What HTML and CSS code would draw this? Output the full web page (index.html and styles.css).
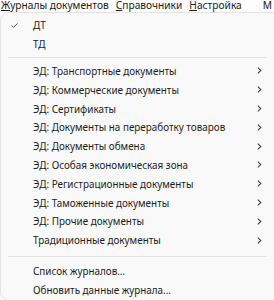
FILE: index.html
```html
<!DOCTYPE html>
<html>
<head>
    <title>Журналы документов</title>
    <link rel="stylesheet" href="styles.css">
</head>
<body>
    <div class="menubar">
        <span class="top-item"><u>Ж</u>урналы документов</span>
        <span class="top-item"><u>С</u>правочники</span>
        <span class="top-item"><u>Н</u>астройка</span>
        <span class="top-item">М</span>
    </div>

    <div class="dropdown">
        <div class="row">
            <span class="mark">
                <svg width="7" height="5" viewBox="0 0 7 5"><polyline points="0.5,2.3 2.5,4.3 6.5,0.5" fill="none" stroke="#555" stroke-width="1"/></svg>
            </span>
            <span class="label">ДТ</span>
        </div>
        <div class="row"><span class="mark"></span><span class="label">ТД</span></div>

        <div class="sep sep-top"></div>

        <div class="row sub"><span class="mark"></span><span class="label">ЭД: Транспортные документы</span><span class="arrow"></span></div>
        <div class="row sub"><span class="mark"></span><span class="label">ЭД: Коммерческие документы</span><span class="arrow"></span></div>
        <div class="row sub"><span class="mark"></span><span class="label">ЭД: Сертификаты</span><span class="arrow"></span></div>
        <div class="row sub"><span class="mark"></span><span class="label">ЭД: Документы на переработку товаров</span><span class="arrow"></span></div>
        <div class="row sub"><span class="mark"></span><span class="label">ЭД: Документы обмена</span><span class="arrow"></span></div>
        <div class="row sub"><span class="mark"></span><span class="label">ЭД: Особая экономическая зона</span><span class="arrow"></span></div>
        <div class="row sub"><span class="mark"></span><span class="label">ЭД: Регистрационные документы</span><span class="arrow"></span></div>
        <div class="row sub"><span class="mark"></span><span class="label">ЭД: Таможенные документы</span><span class="arrow"></span></div>
        <div class="row sub"><span class="mark"></span><span class="label">ЭД: Прочие документы</span><span class="arrow"></span></div>
        <div class="row sub"><span class="mark"></span><span class="label">Традиционные документы</span><span class="arrow"></span></div>

        <div class="sep sep-bottom"></div>

        <div class="row"><span class="mark"></span><span class="label">Список журналов...</span></div>
        <div class="row"><span class="mark"></span><span class="label">Обновить данные журнала...</span></div>
    </div>

    <script>
        // шеврон подменю одинаковый у всех строк
        document.querySelectorAll('.arrow').forEach(a => {
            a.innerHTML = '<svg width="5" height="7" viewBox="0 0 5 7"><polyline points="0.8,0.6 3.8,3.5 0.8,6.4" fill="none" stroke="#444" stroke-width="1.1"/></svg>';
        });
    </script>
</body>
</html>
```

FILE: styles.css
```css
body {
    margin: 0;
    padding: 0;
    background: #fdfdfd;
    font-family: 'Noto Sans', 'Open Sans', sans-serif;
    font-size: 10px;
    color: #1b1b1b;
    overflow: hidden;
}

/* верхнее меню, обрезано сверху */
.menubar {
    height: 12px;
    margin-top: -3px;
    padding-left: 1px;
    display: flex;
    gap: 7px;
    line-height: 16px;
    font-size: 10.2px;
    white-space: nowrap;
}
.top-item u {
    text-decoration-thickness: 1px;
    text-underline-offset: 1px;
}
.top-item:last-child {
    margin-left: 14px;
}

.dropdown {
    margin-top: 3px;
    width: 290px;
    background: #f9f9f9;
    border: 1px solid #e4e4e4;
    border-radius: 8px;
    padding: 3px 0 1px;
}

.row {
    display: flex;
    align-items: center;
    height: 18.8px;
    white-space: nowrap;
}
.mark {
    width: 32px;
    padding-left: 10px;
    box-sizing: border-box;
    display: flex;
    align-items: center;
}
.label {
    flex: 1;
    font-size: 9.9px;
}
.arrow {
    display: flex;
    align-items: center;
    margin-right: 29px;
}

.sep {
    height: 1px;
    background: #e2e2e2;
    margin: 3px 24px 4px 7px;
}
.sep-bottom {
    margin-top: 6px;
    margin-bottom: 5px;
}
```
